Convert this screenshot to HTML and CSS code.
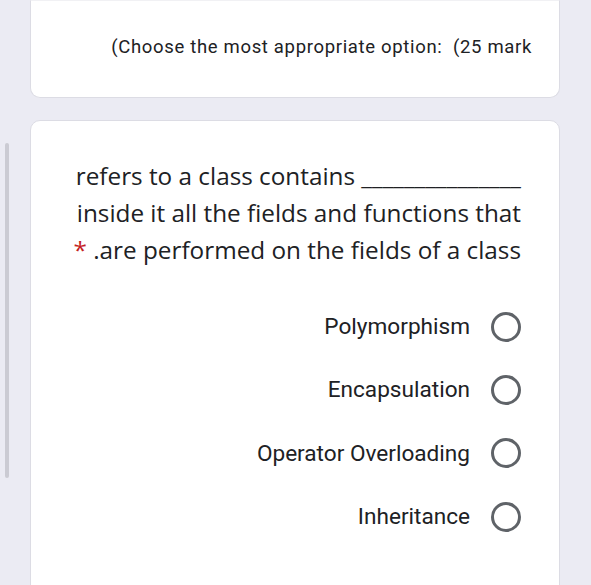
FILE: index.html
```html
<!DOCTYPE html>
<html>
<head>
<meta charset="utf-8">
<link rel="stylesheet" href="styles.css">
</head>
<body>
<div class="scrollbar"></div>
<main class="page">
  <section class="card card-header">
    <p class="desc">(Choose the most appropriate option:&nbsp; (25 mark</p>
  </section>
  <section class="card card-question">
    <div class="question">
      <div class="qline">refers to a class contains <span class="blank">_______________</span></div>
      <div class="qline">inside it all the fields and functions that</div>
      <div class="qline"><span class="req">*</span> .are performed on the fields of a class</div>
    </div>
    <ul class="options">
      <li class="option"><span class="label">Polymorphism</span><span class="radio"></span></li>
      <li class="option"><span class="label">Encapsulation</span><span class="radio"></span></li>
      <li class="option"><span class="label">Operator Overloading</span><span class="radio"></span></li>
      <li class="option"><span class="label">Inheritance</span><span class="radio"></span></li>
    </ul>
  </section>
</main>
</body>
</html>
```
FILE: styles.css
```css
html, body {
  margin: 0;
  padding: 0;
  background: #ebebf3;
  height: 100%;
  overflow: hidden;
}
.scrollbar {
  position: fixed;
  left: 5px;
  top: 143px;
  width: 4px;
  height: 335px;
  background: #cbcbd3;
  border-radius: 2px;
}
.page {
  padding-left: 30px;
  width: 530px;
  display: flex;
  flex-direction: column;
  gap: 22px;
}
.card {
  background: #ffffff;
  border: 1px solid #dcdce4;
  box-sizing: border-box;
  border-radius: 10px;
}
.card-header {
  height: 98px;
  border-top: 1px solid #f1f1f4;
  border-top-left-radius: 0;
  border-top-right-radius: 0;
  display: flex;
  align-items: center;
  justify-content: flex-end;
  padding-right: 27px;
}
.desc {
  margin: 0;
  margin-top: -4px;
  font-family: Roboto, "Liberation Sans", sans-serif;
  font-size: 18.5px;
  color: #202124;
  letter-spacing: 0.67px;
  white-space: nowrap;
}
.card-question {
  height: 500px;
  padding: 36px 38px 0 38px;
}
.question {
  display: flex;
  flex-direction: column;
  align-items: flex-end;
  font-family: "Open Sans", "Noto Sans", sans-serif;
  font-size: 24.3px;
  line-height: 37px;
  color: #202124;
}
.qline {
  white-space: nowrap;
}
.req {
  color: #c5221f;
}
.blank {
  letter-spacing: 0;
}
.options {
  list-style: none;
  margin: 27px 0 0 0;
  padding: 0;
  display: flex;
  flex-direction: column;
}
.option {
  height: 63.3px;
  display: flex;
  align-items: center;
  justify-content: flex-end;
  gap: 21px;
}
.label {
  font-family: Roboto, "Liberation Sans", sans-serif;
  font-size: 22.6px;
  color: #202124;
}
.radio {
  width: 30px;
  height: 30px;
  box-sizing: border-box;
  border: 3px solid #5f6368;
  border-radius: 50%;
}
```
